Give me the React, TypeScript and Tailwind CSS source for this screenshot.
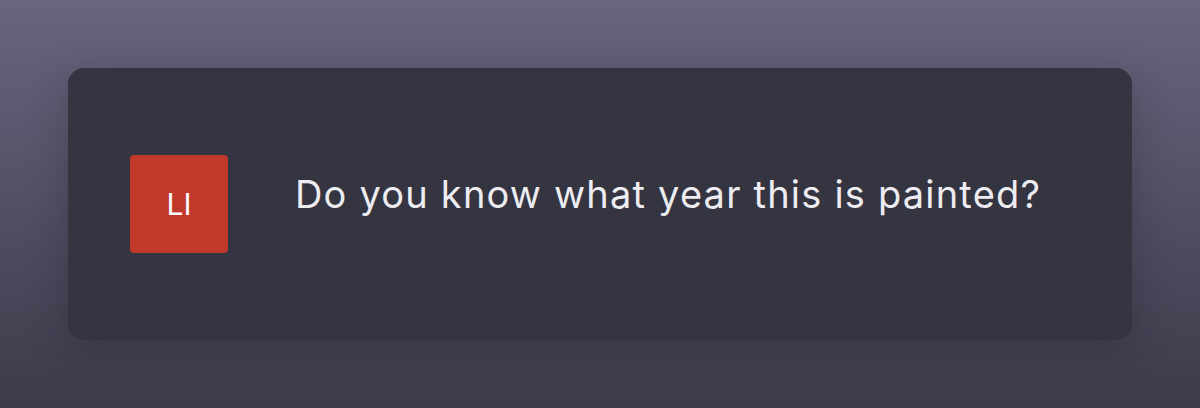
export default function App() {
  return (
    <div className="w-[1200px] h-[408px] bg-gradient-to-b from-[#68667f] to-[#3c3b4a] pt-[68px] px-[68px]">
      <div className="h-[272px] rounded-2xl bg-[#353441] shadow-[0_10px_40px_rgba(20,20,30,0.25)] flex items-center pl-[62px]">
        <div className="w-[98px] h-[98px] rounded-[4px] bg-[#c0392b] flex items-center justify-center text-white text-[30px] font-['Inter',sans-serif]">
          LI
        </div>
        <p className="ml-[67px] mb-[20px] text-[#ececf1] text-[38px] tracking-[1.2px] font-['Inter',sans-serif]">
          Do you know what year this is painted?
        </p>
      </div>
    </div>
  );
}
